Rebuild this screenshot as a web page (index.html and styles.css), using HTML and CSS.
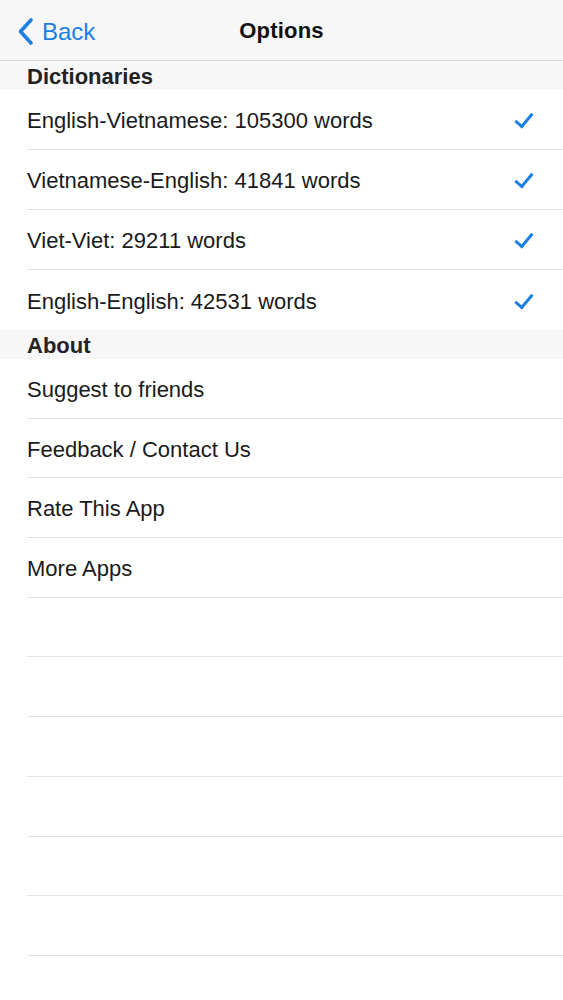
FILE: index.html
```html
<!DOCTYPE html>
<html lang="en">
<head>
    <meta charset="UTF-8">
    <meta name="viewport" content="width=device-width, initial-scale=1.0">
    <title>Options</title>
    <link rel="stylesheet" href="styles.css">
</head>
<body>

    <!-- top bar -->
    <div class="navbar">
        <a class="back" href="#">
            <svg class="chevron" width="17" height="29" viewBox="0 0 17 29">
                <path d="M14 3 L3.5 14.5 L14 26" fill="none" stroke="#1b7fe3" stroke-width="3.6" stroke-linecap="round" stroke-linejoin="round"/>
            </svg>
            <span>Back</span>
        </a>
        <div class="title">Options</div>
    </div>

    <!-- dictionaries -->
    <div class="group-header">Dictionaries</div>
    <ul class="list dicts">
        <li class="row"><span>English-Vietnamese: 105300 words</span><span class="check"></span></li>
        <li class="row"><span>Vietnamese-English: 41841 words</span><span class="check"></span></li>
        <li class="row"><span>Viet-Viet: 29211 words</span><span class="check"></span></li>
        <li class="row last"><span>English-English: 42531 words</span><span class="check"></span></li>
    </ul>

    <!-- about -->
    <div class="group-header">About</div>
    <ul class="list">
        <li class="row"><span>Suggest to friends</span></li>
        <li class="row"><span>Feedback / Contact Us</span></li>
        <li class="row"><span>Rate This App</span></li>
        <li class="row"><span>More Apps</span></li>
        <li class="row empty"></li>
        <li class="row empty"></li>
        <li class="row empty"></li>
        <li class="row empty"></li>
        <li class="row empty"></li>
        <li class="row empty"></li>
    </ul>

</body>
</html>
```

FILE: styles.css
```css
body {
    margin: 0;
    font-family: "Liberation Sans", Arial, sans-serif;
    color: #1a1a1a;
    background: #fff;
}
.navbar {
    position: relative;
    height: 61px;
    box-sizing: border-box;
    padding-top: 2px;
    background: #f7f7f7;
    border-bottom: 1px solid #d6d6d8;
    display: flex;
    align-items: center;
    justify-content: center;
}
.back {
    position: absolute;
    left: 17px;
    top: 16px;
    display: flex;
    align-items: center;
    gap: 8px;
    color: #1b7fe3;
    text-decoration: none;
    font-size: 24px;
}
.back span {
    padding-top: 2px;
}
.chevron {
    display: block;
}
.title {
    font-size: 22px;
    font-weight: bold;
    color: #111;
    letter-spacing: 0.2px;
}
.group-header {
    height: 29px;
    line-height: 31px;
    padding-left: 27px;
    background: #f7f7f8;
    font-size: 22px;
    font-weight: bold;
    color: #222;
}
.list {
    list-style: none;
    margin: 0;
    padding: 0 0 0 27px;
}
.row {
    height: 59.7px;
    box-sizing: border-box;
    border-bottom: 1px solid #e4e4e6;
    display: flex;
    align-items: center;
    justify-content: space-between;
    padding-right: 27px;
    padding-top: 3px;
    font-size: 22px;
}
.dicts .row {
    height: 60px;
}
.row.last {
    border-bottom: none;
}
.check {
    width: 15px;
    height: 7px;
    border-left: 3px solid #1b7fe3;
    border-bottom: 3px solid #1b7fe3;
    transform: rotate(-50deg) translateY(-4px);
}
```
